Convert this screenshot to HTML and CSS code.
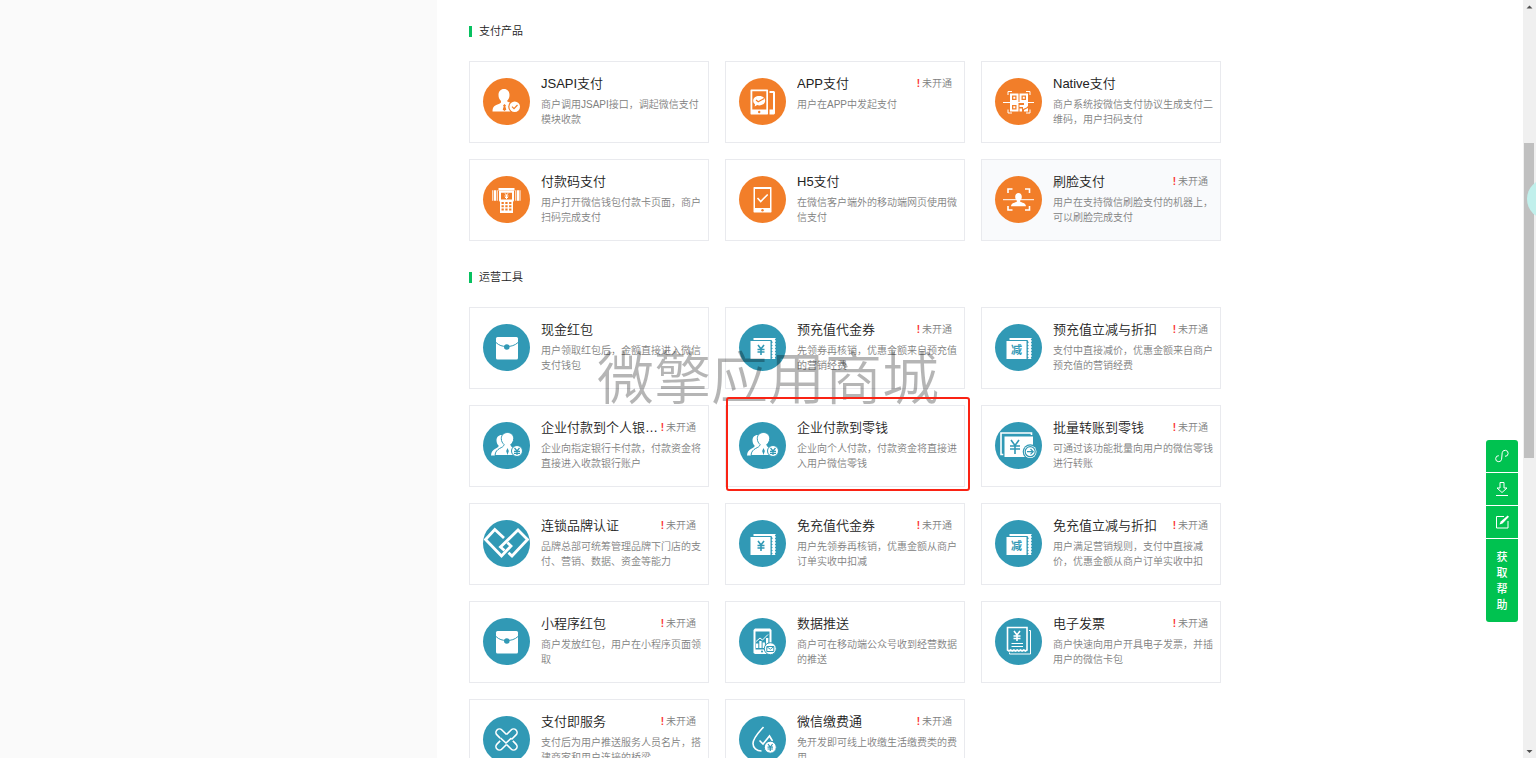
FILE: index.html
```html
<!DOCTYPE html>
<html lang="zh-CN">
<head>
<meta charset="utf-8">
<title>产品中心</title>
<link rel="stylesheet" href="styles.css">
</head>
<body>
<svg class="sprite" aria-hidden="true">
  <symbol id="i-jsapi" viewBox="0 0 47 47">
    <path fill="#fff" d="M21 11c-3.400 0-5.500 2.500-5.500 6 0 2.800 1 4.600 2.500 6v1.500c-1 1.500-4.500 2-6.500 3.500-1.500 1.200-2 3-2 5.500h18.500V24.800c-2.500-.6-3.500-1-4-1.800 1.500-1.400 2.500-3.200 2.500-6 0-3.500-2.100-6-5.500-6z"/>
    <path class="cut" d="M21.500 26l1.500 1.500-.7 1 1 3-1.800 1.500-1.800-1.500 1-3-.7-1z"/>
    <circle class="cut" cx="31.700" cy="28.700" r="6.500"/><circle fill="#fff" cx="31.700" cy="28.700" r="5.300"/>
    <path class="cutline" d="M29 28.700l2 2 3.500-3.700"/>
  </symbol>
  <symbol id="i-app" viewBox="0 0 47 47">
    <path fill="#fff" fill-rule="evenodd" d="M12 11.500h16.500l.5.500v24l-.5.500H12l-.5-.5V12zM13.300 13.300v18.200h14V13.300z"/>
    <path fill="#fff" d="M30.500 13H35l1 1v21.500l-1 1h-4.500v-5H34V15h-3.500z"/>
    <circle class="cut" cx="20.200" cy="34" r="1.200"/>
    <path fill="#fff" d="M20.200 18c3.500 0 6 2 6 4.700s-2.500 4.700-6 4.700l-2-.3-2.500 1.300.3-2.200c-1.200-.9-1.800-2.100-1.800-3.500 0-2.700 2.500-4.700 6-4.700z"/>
    <path class="cutline" d="M17 22l2.200 1.800 6-3.300"/>
  </symbol>
  <symbol id="i-native" viewBox="0 0 47 47">
    <path class="line thin" d="M13 17v-3.500h4M31 13.500h4V17M13 31.500V35h4M31 35h4v-3.500M8 24.500h31"/>
    <path fill="#fff" fill-rule="evenodd" d="M15 15.500h8.500V24H15zm2 2V22h4.500v-4.500zm7.500-2H33V24h-8.500zm2 2V22H31v-4.500zM15 25h8.500v8.500H15zm2 2v4.500h4.500V27zM29 25h4v3l-1.500 1.500L28 31v-2h-3.500v-2H29zM24.500 30.500H27V33.500h-2.500zM29 32l4-2v3.500h-4z"/>
    <path fill="#fff" d="M18.300 18.800h2v2h-2zM27.800 18.800h2v2h-2zM18.300 28.300h2v2h-2z"/>
  </symbol>
  <symbol id="i-code" viewBox="0 0 47 47">
    <path fill="#fff" d="M15.500 12h16v2.800h-16zM9.300 14.300h1v10.500h-1zM11 14.300h2v10.500h-2zM13.700 14.300h1v10.500h-1zM32.300 14.300h1v10.500h-1zM34 14.300h2v10.500h-2zM36.500 14.300h1v10.500h-1z"/>
    <path fill="#fff" fill-rule="evenodd" d="M16 15h15v9.500L30 26v11H17V26l-1-1.500zm2 1.700v6.800h11v-6.800zM18.500 26v2h2.300v-2zm3.800 0v2h2.300v-2zm3.800 0v2h2.300v-2zm-7.600 3.200v2h2.300v-2zm3.800 0v2h2.300v-2zm3.800 0v2h2.300v-2zm-7.600 3.200v2h2.300v-2zm3.800 0v2h2.300v-2zm3.800 0v2h2.300v-2z"/>
    <path class="line thin" d="M22 17.300l1.500 2 1.500-2M21.500 20h4M23.500 19v4M22 21.500h3"/>
  </symbol>
  <symbol id="i-h5" viewBox="0 0 47 47">
    <path fill="#fff" fill-rule="evenodd" d="M15 11h17l.5.500v24.500l-.5.500H15l-.5-.5V11.500zm1 2v19h15V13z"/>
    <circle class="cut" cx="23.500" cy="34.300" r="1.200"/>
    <path class="line" d="M18.500 22l3.200 3.500 7-7"/>
  </symbol>
  <symbol id="i-face" viewBox="0 0 47 47">
    <path class="line" d="M13 17v-4h4.500M30 13h4.500v4M13 30v4h4.500M30 34h4.500v-4"/>
    <path class="line thin" d="M8 23.700h31"/>
    <path fill="#fff" d="M23.500 17c-2 0-3.300 1.500-3.300 3.700 0 1.600.6 2.900 1.600 3.700v1.400c-1.300.9-5.800 1.200-5.800 4.500h15c0-3.300-4.500-3.600-5.800-4.500v-1.400c1-.8 1.600-2.100 1.600-3.700 0-2.200-1.300-3.700-3.300-3.700z"/>
  </symbol>
  <symbol id="i-packet" viewBox="0 0 47 47">
    <rect fill="#fff" x="13" y="13" width="22" height="22.500" rx="1.500"/>
    <path class="cutline fine" d="M13 18.500c3 3 6.500 4 10.800 4s8-1 11.200-4"/>
    <circle class="cut" cx="23.800" cy="23" r="2.800"/>
  </symbol>
  <symbol id="i-people" viewBox="0 0 47 47">
    <path fill="#fff" d="M18.500 13c-3 0-5 2.300-5 5.300 0 2.500.9 4.200 2.200 5.400-.3 3.300-7.200 2.300-7.700 9.800h16V13z"/>
    <path class="badge" d="M24.500 10.500c-3.800 0-6.200 2.600-6.200 6 0 2.900 1.300 4.700 2.800 6-.3 4-8.700 3-9.100 11h22V27c-3-1.500-5.900-1.500-6.200-4.500 1.500-1.300 2.900-3.100 2.900-6 0-3.400-2.400-6-6.200-6z"/>
    <path class="cut" d="M24.500 26l1.300 3-1.300 4-1.300-4z"/>
    <circle class="badge" cx="34" cy="29" r="5.500"/>
    <path class="cutline" d="M31.500 26l2.500 3 2.500-3M31 29.300h6M31 31.300h6M34 29v4"/>
  </symbol>
  <symbol id="i-ticket" viewBox="0 0 47 47">
    <path fill="#fff" d="M11.500 17H31.500v18H11.500zM14.500 14H37l-1.200 1.500 1.200 1.500-1.200 1.500 1.200 1.500-1.200 1.500 1.200 1.500-1.200 1.500 1.200 1.500-1.200 1.500 1.200 1.500-1.200 1.500 1.200 1.500-1.200 1.500.7 1.500H32.500l1.200-1.500-1.200-1.500 1.200-1.500-1.200-1.500 1.200-1.500-1.200-1.500 1.200-1.500-1.200-1.500 1.200-1.500-1.200-1.500 1.200-1.500-1.200-2.500H14.500z"/>
  </symbol>
  <symbol id="i-coupon" viewBox="0 0 47 47">
    <use href="#i-ticket"/>
    <path class="cutline bold" d="M19 21l3 4 3-4M18.500 25.500h7M18.500 28h7M22 25.500v5.500"/>
  </symbol>
  <symbol id="i-minus" viewBox="0 0 47 47">
    <use href="#i-ticket"/>
    <text class="cut word" x="21.500" y="30" text-anchor="middle">减</text>
  </symbol>
  <symbol id="i-batch" viewBox="0 0 47 47">
    <path class="line" d="M8.500 32.500H6V11h30.500v2"/>
    <path class="badge" d="M9 14h29.500v21.500H9z"/>
    <path class="cutline bold" d="M16 18l4 5.500 4-5.500M15 24h10M15 27h10M20 24v8"/>
    <circle class="cut" cx="35.200" cy="29.700" r="7.500"/><circle fill="#fff" cx="35.200" cy="29.700" r="6.300"/>
    <circle class="cutline" cx="35.200" cy="29.700" r="5"/>
    <path class="cutline" d="M32 29.700h6M35.500 27l2.700 2.700-2.700 2.700"/>
  </symbol>
  <symbol id="i-chain" viewBox="0 0 47 47">
    <path class="line heavy" d="M21 18l-9.200-8.500L2.500 19.500l16 16.500 9.500-10-3.700-3.500"/>
    <path class="line heavy" d="M21.500 30.500L17.500 27 35 10l9.500 9.500L29 36l-3.500-3.300"/>
  </symbol>
  <symbol id="i-data" viewBox="0 0 47 47">
    <path fill="#fff" fill-rule="evenodd" d="M16 10.500h15l1.500 1.500v23L31 36H16l-1.500-1V12zm.5 3v18h14v-18z"/>
    <path fill="#fff" d="M17 25.500h2.300V30H17zM20.300 23h2.300v7h-2.300zM23.600 24.500h2.300V30h-2.300zM27 20h2.300v10H27z"/>
    <path class="line thin" d="M17 23.500l4-3.500 2.500 2 5.500-5.500"/>
    <circle class="cut" cx="23" cy="33.500" r="1"/>
    <circle class="badge" cx="31.300" cy="30.700" r="6"/>
    <path class="cutline fine" d="M27.800 28.500h7v5h-7zM28 28.800l3.300 2.500 3.300-2.500"/>
  </symbol>
  <symbol id="i-invoice" viewBox="0 0 47 47">
    <path class="line" d="M12.500 32V9.500h19.500V32l-1.600 1-1.600-1-1.700 1-1.600-1-1.700 1-1.600-1-1.700 1-1.600-1-1.700 1-1.600-1-1.600 1z"/>
    <path class="line thin" d="M34 12.500h1.500V36H14.500v-1.500"/>
    <path class="line" d="M19 13l3 4 3-4M18.500 18h7M18.500 20.500h7M22 17v6"/>
    <path class="line thin" d="M16.500 25.500h11.500M16.500 28.500h11.500"/>
  </symbol>
  <symbol id="i-service" viewBox="0 0 47 47">
    <g class="line" transform="translate(23.500 23.500)">
      <path transform="rotate(-45)" d="M-3.500-5.500v-4.500a3.500 3.500 0 0 1 7 0v6.500"/>
      <path transform="rotate(45)" d="M-3.500-3.500v-6.500a3.500 3.500 0 0 1 7 0v6.500"/>
      <path transform="rotate(135)" d="M-3.500-5.500v-4.500a3.500 3.500 0 0 1 7 0v6.500"/>
      <path transform="rotate(225)" d="M-3.500-3.500v-6.500a3.500 3.500 0 0 1 7 0v4.500"/>
      <path d="M-6-1.500L-.5 3.500 5-1.500"/>
    </g>
  </symbol>
  <symbol id="i-drop" viewBox="0 0 47 47">
    <path class="line" d="M24.500 11c-4 4.500-10.500 11-10.500 16.500 0 4.200 3.500 7.500 8.500 7.500M20.500 24.500l3.500 3.500 6.500-8 3 5"/>
    <circle class="badge" cx="31.300" cy="31.200" r="6"/>
    <path class="cutline" d="M29 28l2.300 3 2.300-3M28.500 31.200h5.500M28.500 33h5.500M31.300 31v4"/>
  </symbol>
</svg>

<div class="page">
  <aside class="side"></aside>
  <main class="main">
    <section class="group pay">
      <h2 class="heading">支付产品</h2>
      <div class="grid">
        <a class="card" href="#"><svg class="icon"><use href="#i-jsapi"/></svg><div class="body"><div class="top"><h3>JSAPI支付</h3></div><p>商户调用JSAPI接口，调起微信支付模块收款</p></div></a>
        <a class="card" href="#"><svg class="icon"><use href="#i-app"/></svg><div class="body"><div class="top"><h3>APP支付</h3><span class="status"><b>!</b>未开通</span></div><p>用户在APP中发起支付</p></div></a>
        <a class="card" href="#"><svg class="icon"><use href="#i-native"/></svg><div class="body"><div class="top"><h3>Native支付</h3></div><p>商户系统按微信支付协议生成支付二维码，用户扫码支付</p></div></a>
        <a class="card" href="#"><svg class="icon"><use href="#i-code"/></svg><div class="body"><div class="top"><h3>付款码支付</h3></div><p>用户打开微信钱包付款卡页面，商户扫码完成支付</p></div></a>
        <a class="card" href="#"><svg class="icon"><use href="#i-h5"/></svg><div class="body"><div class="top"><h3>H5支付</h3></div><p>在微信客户端外的移动端网页使用微信支付</p></div></a>
        <a class="card active" href="#"><svg class="icon"><use href="#i-face"/></svg><div class="body"><div class="top"><h3>刷脸支付</h3><span class="status"><b>!</b>未开通</span></div><p>用户在支持微信刷脸支付的机器上，可以刷脸完成支付</p></div></a>
      </div>
    </section>
    <section class="group tools">
      <h2 class="heading">运营工具</h2>
      <div class="grid">
        <a class="card" href="#"><svg class="icon"><use href="#i-packet"/></svg><div class="body"><div class="top"><h3>现金红包</h3></div><p>用户领取红包后，金额直接进入微信支付钱包</p></div></a>
        <a class="card" href="#"><svg class="icon"><use href="#i-coupon"/></svg><div class="body"><div class="top"><h3>预充值代金券</h3><span class="status"><b>!</b>未开通</span></div><p>先领券再核销，优惠金额来自预充值的营销经费</p></div></a>
        <a class="card" href="#"><svg class="icon"><use href="#i-minus"/></svg><div class="body"><div class="top"><h3>预充值立减与折扣</h3><span class="status"><b>!</b>未开通</span></div><p>支付中直接减价，优惠金额来自商户预充值的营销经费</p></div></a>
        <a class="card" href="#"><svg class="icon"><use href="#i-people"/></svg><div class="body"><div class="top"><h3>企业付款到个人银行卡</h3><span class="status"><b>!</b>未开通</span></div><p>企业向指定银行卡付款，付款资金将直接进入收款银行账户</p></div></a>
        <a class="card marked" href="#"><svg class="icon"><use href="#i-people"/></svg><div class="body"><div class="top"><h3>企业付款到零钱</h3></div><p>企业向个人付款，付款资金将直接进入用户微信零钱</p></div></a>
        <a class="card" href="#"><svg class="icon"><use href="#i-batch"/></svg><div class="body"><div class="top"><h3>批量转账到零钱</h3><span class="status"><b>!</b>未开通</span></div><p>可通过该功能批量向用户的微信零钱进行转账</p></div></a>
        <a class="card" href="#"><svg class="icon"><use href="#i-chain"/></svg><div class="body"><div class="top"><h3>连锁品牌认证</h3><span class="status"><b>!</b>未开通</span></div><p>品牌总部可统筹管理品牌下门店的支付、营销、数据、资金等能力</p></div></a>
        <a class="card" href="#"><svg class="icon"><use href="#i-coupon"/></svg><div class="body"><div class="top"><h3>免充值代金券</h3><span class="status"><b>!</b>未开通</span></div><p>用户先领券再核销，优惠金额从商户订单实收中扣减</p></div></a>
        <a class="card" href="#"><svg class="icon"><use href="#i-minus"/></svg><div class="body"><div class="top"><h3>免充值立减与折扣</h3><span class="status"><b>!</b>未开通</span></div><p>用户满足营销规则，支付中直接减价，优惠金额从商户订单实收中扣</p></div></a>
        <a class="card" href="#"><svg class="icon"><use href="#i-packet"/></svg><div class="body"><div class="top"><h3>小程序红包</h3><span class="status"><b>!</b>未开通</span></div><p>商户发放红包，用户在小程序页面领取</p></div></a>
        <a class="card" href="#"><svg class="icon"><use href="#i-data"/></svg><div class="body"><div class="top"><h3>数据推送</h3></div><p>商户可在移动端公众号收到经营数据的推送</p></div></a>
        <a class="card" href="#"><svg class="icon"><use href="#i-invoice"/></svg><div class="body"><div class="top"><h3>电子发票</h3><span class="status"><b>!</b>未开通</span></div><p>商户快速向用户开具电子发票，并插用户的微信卡包</p></div></a>
        <a class="card" href="#"><svg class="icon"><use href="#i-service"/></svg><div class="body"><div class="top"><h3>支付即服务</h3><span class="status"><b>!</b>未开通</span></div><p>支付后为用户推送服务人员名片，搭建商家和用户连接的桥梁</p></div></a>
        <a class="card" href="#"><svg class="icon"><use href="#i-drop"/></svg><div class="body"><div class="top"><h3>微信缴费通</h3><span class="status"><b>!</b>未开通</span></div><p>免开发即可线上收缴生活缴费类的费用</p></div></a>
      </div>
    </section>
  </main>
  <div class="scrollbar" aria-hidden="true">
    <svg class="arrow" viewBox="0 0 13 13"><path d="M3.500 8.500l3-3 3 3z"/></svg>
    <div class="track"><div class="thumb"></div></div>
    <svg class="arrow" viewBox="0 0 13 13"><path d="M3.500 5l3 3 3-3z"/></svg>
  </div>
</div>

<div class="watermark">微擎应用商城</div>
<div class="bubble"></div>
<nav class="toolbar">
  <button type="button" aria-label="链接"><svg viewBox="0 0 16 16"><path d="M11 8.300a3 3 0 1 0-2.800-3.600l-.6 6.600a3 3 0 1 1-2.800-3.600"/></svg></button>
  <button type="button" aria-label="下载"><svg viewBox="0 0 16 16"><path d="M6 1.500h4v5.500h3L8 11.500 3 7h3zM2 14.500h12"/></svg></button>
  <button type="button" aria-label="编辑"><svg viewBox="0 0 16 16"><path d="M10 2.500H2.500v11.500H14V7"/><path class="pen" d="M5.500 10.500l1.200-3 7-6 1.300 1.300-6.500 6.700z"/></svg></button>
  <button type="button" class="help">获取帮助</button>
</nav>
</body>
</html>
```
FILE: styles.css
```css
* { box-sizing: border-box; }

body {
  margin: 0;
  overflow: hidden;
  background: #fff;
  color: #222;
  font-family: "Liberation Sans", "Noto Sans CJK SC", sans-serif;
  font-weight: 350;
}

h2, h3, p { margin: 0; font-weight: 350; }

.sprite { position: absolute; width: 0; height: 0; }

.page { display: flex; height: 100vh; overflow: hidden; }

.side { flex: 0 1 437px; background: #fafafa; }

.main { flex: 1 1 0; min-width: 0; padding: 21px 32px 0; overflow: hidden; }

.group { max-width: 752px; margin-bottom: 26px; }
.pay { --tone: #f27e29; }
.tools { --tone: #3199b5; }

.heading {
  display: flex;
  align-items: center;
  gap: 7px;
  margin-bottom: 20px;
  font-size: 11px;
  line-height: 20px;
}
.heading::before { content: ""; width: 3px; height: 11px; background: #07c160; }

.grid { display: grid; grid-template-columns: repeat(3, minmax(0, 1fr)); gap: 16px; }

.card {
  position: relative;
  display: flex;
  gap: 11px;
  min-height: 82px;
  padding: 12px 7px 12px 13px;
  border: 1px solid #e9eaee;
  background: #fff;
  color: #222;
  text-decoration: none;
}
.card.active { background: #f9fafc; }
.card.marked::after {
  content: "";
  position: absolute;
  z-index: 3;
  inset: -9px -6px -5px 0;
  border: 2px solid #fa2314;
  border-radius: 3px;
}

.icon {
  flex: none;
  width: 47px;
  height: 47px;
  margin-top: 4px;
  border-radius: 50%;
  background: var(--tone);
}
.line { fill: none; stroke: #fff; stroke-width: 1.6; }
.thin { stroke-width: 1; }
.heavy { stroke-width: 2.8; }
.cut { fill: var(--tone); }
.cutline { fill: none; stroke: var(--tone); stroke-width: 1.2; }
.cutline.fine { stroke-width: 1; }
.cutline.bold { stroke-width: 1.6; }
.badge { fill: #fff; stroke: var(--tone); stroke-width: 1; }
.word { font-size: 11px; font-weight: 700; }

.body { flex: 1; min-width: 0; }
.top { display: flex; align-items: center; margin-bottom: 3px; padding-right: 5px; line-height: 20px; }
.top h3 {
  flex: 1;
  min-width: 0;
  overflow: hidden;
  font-size: 13px;
  text-overflow: ellipsis;
  white-space: nowrap;
}
.status { flex: none; color: #808080; font-size: 10px; }
.status b { margin-right: 2px; color: #fa3534; font-weight: 700; }
.body p { color: #808080; font-size: 10px; line-height: 15px; }

.scrollbar { display: flex; flex: none; flex-direction: column; width: 13px; background: #f0f0f0; }
.arrow { width: 13px; height: 13px; fill: #505050; }
.track { flex: 1; padding: 130px 2px 0 1px; }
.thumb { height: 315px; background: #c0c0c0; }

.watermark {
  position: fixed;
  z-index: 2;
  inset: 0;
  display: grid;
  place-items: center;
  color: rgba(0, 0, 0, .29);
  font-size: 57px;
  line-height: 1;
  pointer-events: none;
}

.bubble {
  position: fixed;
  top: 179px;
  right: -31px;
  width: 40px;
  height: 40px;
  border-radius: 50%;
  background: #c1f0ec;
}

.toolbar {
  position: fixed;
  top: 440px;
  right: 18px;
  display: flex;
  flex-direction: column;
  gap: 1px;
  width: 32px;
  overflow: hidden;
  border-radius: 3px;
}
.toolbar button {
  display: grid;
  place-items: center;
  height: 32px;
  padding: 0;
  border: 0;
  background: #00c250;
  color: #fff;
}
.toolbar svg { width: 16px; height: 16px; fill: none; stroke: #fff; stroke-width: 1; }
.toolbar .pen { fill: #fff; stroke: none; }
.toolbar .help {
  height: auto;
  padding: 10px 10px 9px;
  font: 500 11px/16px "Liberation Sans", "Noto Sans CJK SC", sans-serif;
}
```
